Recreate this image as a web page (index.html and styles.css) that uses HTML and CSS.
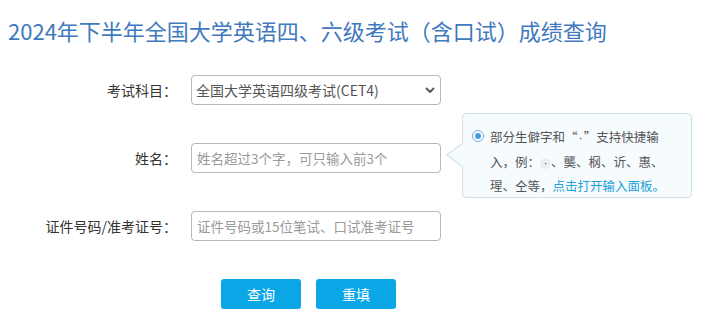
FILE: index.html
```html
<!DOCTYPE html>
<html lang="zh-CN">
<head>
<meta charset="utf-8">
<title>成绩查询</title>
<link rel="stylesheet" href="styles.css">
</head>
<body>
<h1 class="title">2024年下半年全国大学英语四、六级考试（含口试）成绩查询</h1>
<form class="form">
  <div class="row">
    <label class="label">考试科目：</label>
    <div class="select-wrap">
      <select class="field select">
        <option>全国大学英语四级考试(CET4)</option>
        <option>全国大学英语六级考试(CET6)</option>
      </select>
      <svg class="chev" width="10" height="7" viewBox="0 0 10 7"><path d="M1.5 1.5 L5 5 L8.5 1.5" fill="none" stroke="#555" stroke-width="1.8" stroke-linecap="round" stroke-linejoin="round"/></svg>
    </div>
  </div>
  <div class="row">
    <label class="label">姓名：</label>
    <input class="field" type="text" placeholder="姓名超过3个字，可只输入前3个">
    <div class="tip">
      <span class="radio"></span>
      部分生僻字和“<span class="mid">·</span>”支持快捷输入，例：<span class="dot">·</span>、龑、㭎、䜣、惠、瑆、仝等，<a class="link">点击打开输入面板。</a>
    </div>
  </div>
  <div class="row">
    <label class="label">证件号码/准考证号：</label>
    <input class="field" type="text" placeholder="证件号码或15位笔试、口试准考证号">
  </div>
  <div class="buttons">
    <button type="button" class="btn">查询</button>
    <button type="button" class="btn">重填</button>
  </div>
</form>
</body>
</html>
```
FILE: styles.css
```css
body {
  margin: 0;
  font-family: "Noto Sans CJK SC", "Noto Sans", sans-serif;
  color: #333;
  background: #fff;
}
.title {
  margin: 0;
  padding: 14px 0 0 8px;
  font-size: 22px;
  font-weight: normal;
  line-height: 32px;
  color: #4079bd;
  white-space: nowrap;
}
.form {
  margin: 29px 0 0 0;
}
.row {
  display: flex;
  align-items: center;
  height: 30px;
  margin-bottom: 38px;
  position: relative;
}
.label {
  width: 177px;
  padding-right: 14px;
  text-align: right;
  font-size: 14px;
  color: #333;
  white-space: nowrap;
}
.select-wrap {
  position: relative;
  width: 250px;
  height: 30px;
}
.field {
  width: 250px;
  height: 30px;
  box-sizing: border-box;
  border: 1px solid #b8b8b8;
  border-radius: 4px;
  padding: 0 5px;
  font-family: inherit;
  font-size: 13.5px;
  color: #444;
  background: #fff;
  outline: none;
}
.field::placeholder {
  color: #9a9a9a;
}
.select {
  appearance: none;
  -webkit-appearance: none;
  padding-left: 4px;
  font-size: 14px;
  color: #555;
}
.chev {
  position: absolute;
  right: 6px;
  top: 12px;
  pointer-events: none;
}
.tip {
  position: absolute;
  left: 462px;
  top: -30px;
  width: 230px;
  height: 85px;
  box-sizing: border-box;
  border: 1px solid #cfe2ec;
  border-radius: 4px;
  background: #f6fbfe;
  padding: 11px 20px 0 27px;
  font-size: 12.5px;
  line-height: 24px;
  color: #555;
}
.tip::before,
.tip::after {
  content: "";
  position: absolute;
  top: 29px;
  border-style: solid;
  border-width: 12px 16px 12px 0;
}
.tip::before {
  left: -17px;
  border-color: transparent #cfe2ec transparent transparent;
}
.tip::after {
  left: -15px;
  border-color: transparent #f6fbfe transparent transparent;
}
.radio {
  position: absolute;
  left: 9px;
  top: 16px;
  width: 12px;
  height: 12px;
  box-sizing: border-box;
  border: 1px solid #6aaee0;
  border-radius: 50%;
  background: #fff;
}
.radio::after {
  content: "";
  position: absolute;
  left: 2px;
  top: 2px;
  width: 6px;
  height: 6px;
  border-radius: 50%;
  background: #4a9bd8;
}
.mid {
  font-family: "Liberation Sans", sans-serif;
  margin: 0 1px;
}
.dot {
  display: inline-block;
  width: 11px;
  height: 11px;
  line-height: 11px;
  text-align: center;
  border-radius: 50%;
  background: #eceff2;
  font-family: "Liberation Sans", sans-serif;
}
.link {
  color: #1d9fda;
  cursor: pointer;
}
.buttons {
  display: flex;
  gap: 15px;
  padding-left: 221px;
}
.btn {
  width: 80px;
  height: 30px;
  border: none;
  border-radius: 3px;
  background: #0aa6e6;
  color: #fff;
  font-family: inherit;
  font-size: 14px;
  cursor: pointer;
}
```
